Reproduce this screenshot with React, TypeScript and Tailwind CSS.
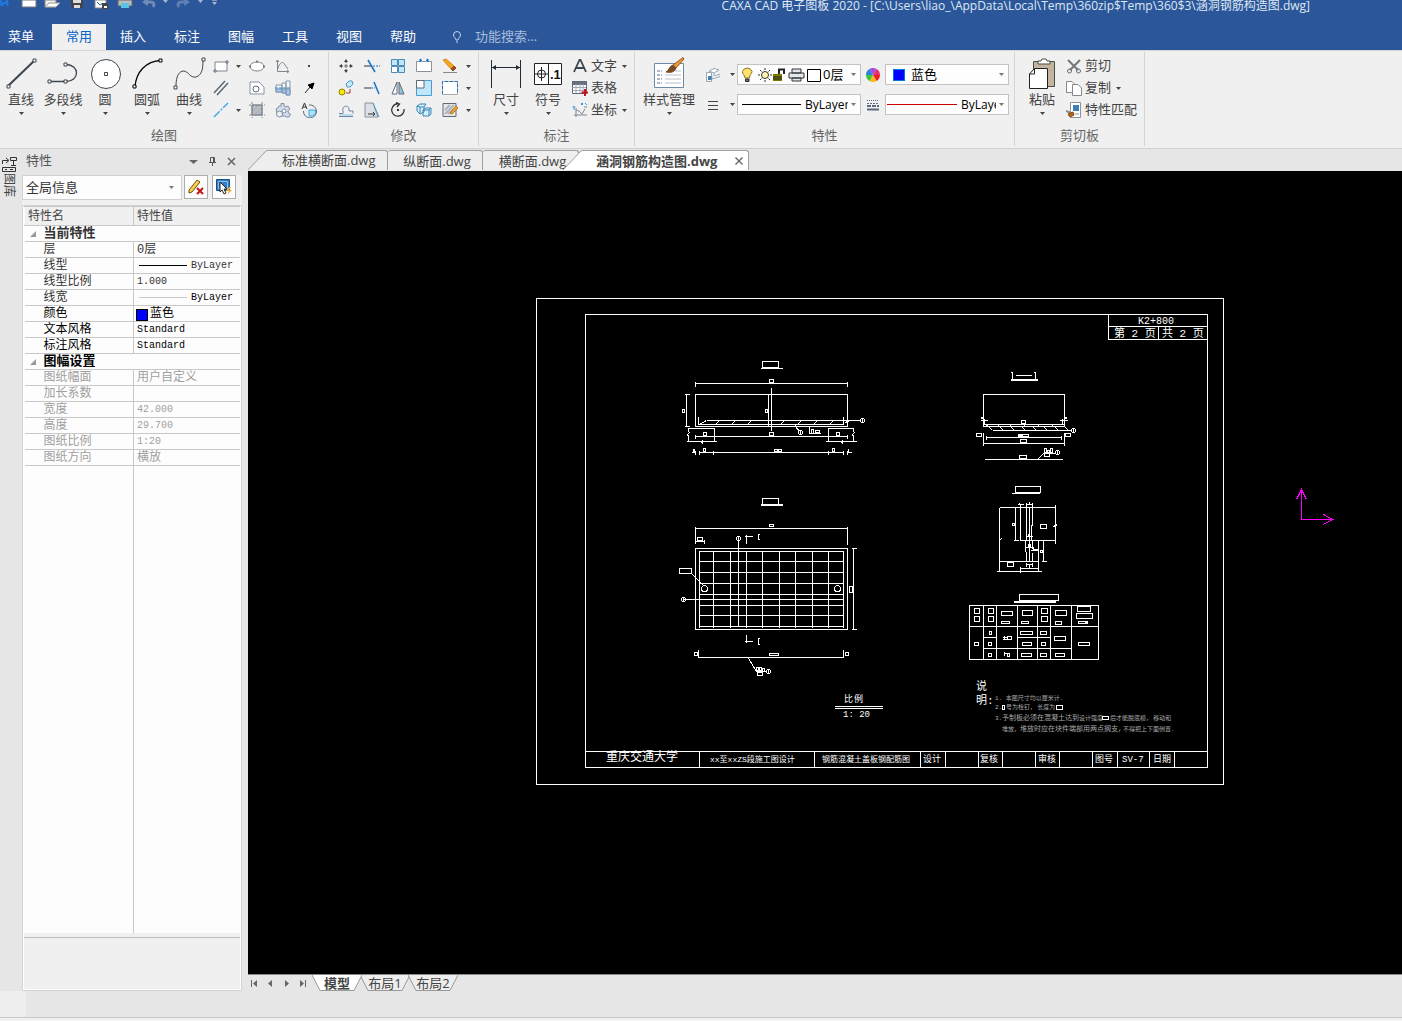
import React from "react";

const ui = "font-['Open_Sans','Noto_Sans_CJK_SC',sans-serif]";
const mono = "font-['Liberation_Mono','Noto_Sans_CJK_SC',monospace]";

function Caret({ className = "" }: { className?: string }) {
  return (
    <svg viewBox="0 0 5 3" className={"h-[3px] w-[5px] shrink-0 " + className} aria-hidden="true">
      <path d="M0 0H5L2.5 3Z" fill="currentColor" />
    </svg>
  );
}

function Ic({ children, className = "size-4" }: { children: React.ReactNode; className?: string }) {
  return (
    <svg viewBox="0 0 16 16" className={"shrink-0 " + className} fill="none" stroke="#5f6b7a" aria-hidden="true">
      {children}
    </svg>
  );
}

function Tool({ label, children, more }: { label: string; children: React.ReactNode; more?: boolean }) {
  return (
    <>
      <button aria-label={label} className="flex h-[22px] items-center justify-center">
        <Ic>{children}</Ic>
      </button>
      {more !== undefined &&
        (more ? (
          <button aria-label={label + "选项"} className="flex items-center justify-center">
            <Caret />
          </button>
        ) : (
          <span />
        ))}
    </>
  );
}

function Big({ label, children, className = "w-[42px]" }: { label: string; children: React.ReactNode; className?: string }) {
  return (
    <button className={"flex flex-col items-center " + className}>
      <svg viewBox="0 0 42 38" className="h-[38px] w-[42px]" fill="none" stroke="#3c4650" aria-hidden="true">
        {children}
      </svg>
      <span className="text-[13px] leading-[18px] whitespace-nowrap">{label}</span>
      <span className="flex h-[11px] items-center">
        <Caret />
      </span>
    </button>
  );
}

function Group({ title, children, className = "" }: { title: string; children: React.ReactNode; className?: string }) {
  return (
    <section className="flex shrink-0 flex-col border-r border-[#d4d4d4]" aria-label={title}>
      <div className={"flex h-[72px] " + className}>{children}</div>
      <h2 className="text-center text-[13px] leading-[22px] text-[#666]">{title}</h2>
    </section>
  );
}

function RowButton({ label, children, more }: { label: string; children: React.ReactNode; more?: boolean }) {
  return (
    <button className="flex h-[22px] items-center text-[13px] whitespace-nowrap">
      <Ic className="mr-[3px] size-4">{children}</Ic>
      {label}
      {more && <Caret className="ml-[5px]" />}
    </button>
  );
}

function Header() {
  const tabs = ["插入", "标注", "图幅", "工具", "视图", "帮助"];
  return (
    <header className="h-[50px] shrink-0 bg-[#2b579a] text-white">
      <div className="flex h-6 items-start justify-between">
        <svg viewBox="0 0 222 12" className="h-3 w-[222px]" fill="none" aria-label="快速访问工具栏">
          <path d="M0 0L3 6M0 5L8 1M6 0L8 6" stroke="#1f7ae0" strokeWidth="2" />
          <path d="M22 0H36V7H22Z" fill="#fff" stroke="#777" />
          <path d="M45 0H56V3H60L56 7H45Z" fill="#eee" stroke="#888" />
          <path d="M49 3H60L56 7H45Z" fill="#fff" stroke="#999" />
          <path d="M71 0H83V8H73L71 6Z" fill="#444" />
          <path d="M73 0H81V3H73ZM74 5H80V8H74Z" fill="#ddd" />
          <path d="M95 0H106V8H95Z" fill="#fff" stroke="#888" />
          <path d="M97 2L100 5L103 3" stroke="#16a" />
          <path d="M102 3H108V9H102Z" fill="#444" />
          <path d="M104 6H107V8H104Z" fill="#fff" />
          <path d="M118 0H132V6H118Z" fill="#bbb" stroke="#666" />
          <path d="M121 3H129V8H121Z" fill="#57c4e8" />
          <path d="M144 2H150C154 2 155 4 153 7" stroke="#7189b8" strokeWidth="3" />
          <path d="M142 2L148 -2V6Z" fill="#7189b8" />
          <path d="M188 2H182C178 2 177 4 179 7" stroke="#5f7eb4" strokeWidth="3" />
          <path d="M190 2L184 -2V6Z" fill="#5f7eb4" />
          <path d="M163 0H168L165.500 3ZM198 0H203L200.500 3ZM212 2H217L214.500 5Z" fill="#aab6cc" />
          <path d="M212 0H217" stroke="#ddd" />
        </svg>
        <h1 className="mr-[92px] text-[12px] leading-[12px] whitespace-nowrap text-[#dfe7f3]">
          CAXA CAD 电子图板 2020 - [C:\Users\liao_\AppData\Local\Temp\360zip$Temp\360$3\涵洞钢筋构造图.dwg]
        </h1>
      </div>
      <nav className="flex h-[26px] items-stretch text-[13px]" aria-label="功能区">
        <button className="w-[42px]">菜单</button>
        <button className="ml-[10px] w-[54px] bg-[#f0f0f0] text-[#0a64c8]">常用</button>
        {tabs.map((t) => (
          <button key={t} className="w-[54px]">
            {t}
          </button>
        ))}
        <label className="ml-[19px] flex items-center">
          <svg viewBox="0 0 16 16" className="mr-[10px] size-4" fill="none" stroke="#c9d6ea" aria-hidden="true">
            <path d="M7 11C7 9 4.500 8.500 4.500 6A3.500 3.500 0 0 1 11.500 6C11.500 8.500 9 9 9 11ZM7 13H9" />
          </svg>
          <input
            aria-label="功能搜索"
            placeholder="功能搜索..."
            className="w-28 bg-transparent text-[13px] outline-none placeholder:text-[#a9bcdb]"
          />
        </label>
      </nav>
    </header>
  );
}

function DrawGroup() {
  return (
    <Group title="绘图">
      <Big label="直线">
        <path d="M8 34L34 9" strokeWidth="2" />
        <path d="M7 33H10V36H7ZM33 7H36V10H33Z" fill="#fff" />
      </Big>
      <Big label="多段线">
        <path d="M8 29.500H24C38 29 38 13 24 12.500" strokeWidth="1.300" />
        <path d="M6 28H9V31H6ZM22 28H25V31H22ZM22 11H25V14H22Z" fill="#fff" />
      </Big>
      <Big label="圆">
        <circle cx="22" cy="22" r="14.500" fill="#fff" />
        <path d="M20.500 20.500H23.500V23.500H20.500Z" />
      </Big>
      <Big label="圆弧">
        <path d="M9 35C10 20 20 9 35 8.500" stroke="#000" strokeWidth="1.300" />
        <path d="M7 33H10V36H7ZM33 7H36V10H33Z" fill="#fff" stroke="#000" />
      </Big>
      <Big label="曲线">
        <path d="M8 34C8 24 11 19 16 19C21 20 22 26 28 25C34 23 35 17 35 8" />
        <path d="M6 34H9V37H6ZM34 6H37V9H34Z" fill="#fff" />
      </Big>
      <div className="mt-[3px] mr-[6px] grid grid-cols-[22px_12px_26px_26px_26px] content-start">
        <Tool label="矩形" more>
          <path d="M2 4H14V13H2Z" fill="#fff" stroke="#7d8792" />
          <path d="M1 12H3V14H1ZM13 3H15V5H13Z" fill="#fff" />
        </Tool>
        <Tool label="椭圆">
          <ellipse cx="8" cy="8.500" rx="7" ry="4.500" fill="#fff" stroke="#7d8792" />
          <path d="M7.500 3.500H8.500M.5 8.500H1.500M14.500 8.500H15.500" stroke="#333" strokeWidth="2" />
        </Tool>
        <Tool label="公式曲线">
          <path d="M2.500 2V13.500H14M2.500 12C5 3 8 3 10 7L13 11M1 4L2.500 2L4 4M12 12L14 13.500L12 15" stroke="#7d8792" />
        </Tool>
        <Tool label="点">
          <path d="M7 8H9" stroke="#444" strokeWidth="2" />
        </Tool>
        <Tool label="平行线" more={false}>
          <path d="M1 13L12 1M4 15L15 3" strokeWidth="1.600" />
        </Tool>
        <Tool label="多边形">
          <path d="M1 2H10L15 7V14H1Z" fill="#fff" stroke="#89929e" />
          <circle cx="7" cy="9" r="3" />
        </Tool>
        <Tool label="轴">
          <path d="M1 5H7V12H1ZM7 3H11V13H7ZM11 1H15V15H11Z" fill="#f4f7fa" stroke="#8a98a8" />
          <path d="M1 9H7V12H1ZM7 9H11V13H7ZM11 9H15V15H11Z" fill="#a9c6e6" stroke="#7d96b3" />
          <path d="M0 8H16" stroke="#3488cc" strokeDasharray="3 1" />
        </Tool>
        <Tool label="箭头">
          <path d="M4 13L9 7" stroke="#222" />
          <path d="M13 3L11 9L7 5Z" fill="#000" stroke="#000" />
        </Tool>
        <Tool label="中心线" more>
          <path d="M1 15L15 1" stroke="#3aa6e0" strokeWidth="1.400" strokeDasharray="8 1.500 2 1.500" />
        </Tool>
        <Tool label="填充">
          <path d="M3 3H13V13H3Z" fill="#b8bec6" />
          <path d="M3 10L10 3M3 6L6 3M5 13L13 5M9 13L13 9" stroke="#a3abb5" />
          <path d="M0 3H16M0 13H16M3 0V16M13 0V16" stroke="#888" strokeDasharray="2 1" />
        </Tool>
        <Tool label="图库">
          <path d="M6 1.500H9V4L11 5L13 4L15 7L13 8.500V10.500L15.500 12L14 15H11L10 14H6L2 11L1 7L3 6L4 4L6 4Z" fill="#d3dcea" stroke="#8090a5" />
          <circle cx="4.500" cy="12" r="3" fill="#eef1f5" stroke="#8090a5" />
          <circle cx="9" cy="9" r="2" fill="#fff" stroke="#8090a5" />
        </Tool>
        <Tool label="局部放大">
          <path d="M8 3A6.500 6.500 0 1 1 2.500 9" />
          <path d="M8 8H14.500V11A6 6 0 0 1 8 14Z" fill="#b5e0f5" stroke="#3aa6e0" />
          <path d="M1 7L3.500 1L6 7M2 5H5" stroke="#333" />
        </Tool>
      </div>
    </Group>
  );
}

function ModifyGroup() {
  return (
    <Group title="修改" className="px-1">
      <div className="mt-[3px] grid grid-cols-[26px_26px_26px_26px_26px_11px] content-start">
        <Tool label="平移">
          <path d="M8 2V5M8 11V14M2 8H5M11 8H14" stroke="#444" />
          <path d="M8 1L6 4H10ZM8 15L6 12H10ZM1 8L4 6V10ZM15 8L12 6V10Z" fill="#444" stroke="none" />
          <path d="M7 7H9V9H7Z" />
        </Tool>
        <Tool label="裁剪">
          <path d="M0 8H7" stroke="#333" />
          <path d="M4 2L11 14" stroke="#1672c4" strokeWidth="1.500" />
          <path d="M9 8H16" stroke="#1672c4" strokeDasharray="2 1" />
        </Tool>
        <Tool label="阵列">
          <path d="M1.500 1.500H7.500V7.500H1.500ZM8.500 1.500H14.500V7.500H8.500ZM8.500 8.500H14.500V14.500H8.500Z" fill="#bfe6fa" stroke="#4a8ab5" />
          <path d="M1.500 8.500H7.500V14.500H1.500Z" fill="#fff" stroke="#4a8ab5" />
        </Tool>
        <Tool label="打断">
          <path d="M4 3.500H.5V13.500H15.500V3.500H12M6 3.500H10" fill="#fff" stroke="#8a939d" />
          <path d="M4 1V4L6 2.500ZM12 1V4L10 2.500Z" fill="#1672c4" stroke="#1672c4" />
        </Tool>
        <Tool label="删除" more>
          <path d="M1 2L4 1L12 8L9 11Z" fill="#f5a623" stroke="#d78b10" />
          <path d="M9 11L12 8L14 10L11 13Z" fill="#a3542a" stroke="#854322" />
          <path d="M1 14.500H15" stroke="#888" />
        </Tool>
        <Tool label="平移复制">
          <circle cx="4" cy="12" r="3" fill="#ffe600" stroke="#8a8500" />
          <path d="M8 4L11 1H14L15 4L12 7H9Z" fill="#c8e9fa" stroke="#4a9bd0" />
          <path d="M8 13H12V9" stroke="#a33" />
        </Tool>
        <Tool label="延伸">
          <path d="M0 8H7" stroke="#333" />
          <path d="M7 8H11" stroke="#1672c4" strokeDasharray="2 1" />
          <path d="M10 2L15 14" stroke="#1672c4" strokeWidth="1.500" />
        </Tool>
        <Tool label="镜像">
          <path d="M7 2V14H2Z" fill="#fff" />
          <path d="M9 2V14H14Z" fill="#8fc4df" />
        </Tool>
        <Tool label="缩放">
          <path d="M.5.5H15.500V15.500H.5Z" fill="#bfe6fa" stroke="#4a9bd0" />
          <path d="M.5 .5H8V8H.5Z" fill="#fff" />
        </Tool>
        <Tool label="拉伸" more>
          <path d="M.5 1.500H15.500V14.500H.5Z" fill="#fff" stroke="#aaa" />
          <path d="M.5 14V1.500H15.500V14" stroke="#1672c4" strokeDasharray="3 2" />
        </Tool>
        <Tool label="等距线">
          <path d="M1 11.500H5C6 10 4 8 5 6C7 3 11 4 11 7V9H15V11.500M1 14.500H15" stroke="#6e87a2" />
          <path d="M1 13H15" stroke="#8cc4e8" />
        </Tool>
        <Tool label="过渡">
          <path d="M1 1H9L14 15H1Z" fill="#dcdfe3" stroke="#8a939d" />
          <path d="M9 1L15 15" stroke="#4a9bd0" />
          <path d="M4 12H11M9 10L11 12L9 14" stroke="#333" />
        </Tool>
        <Tool label="旋转">
          <path d="M9.500 2A6.200 6.200 0 1 0 14 7M6 .5L9.500 2L7 5" stroke="#333" strokeWidth="1.300" />
          <path d="M7 7H9V9H7Z" fill="#333" stroke="none" />
        </Tool>
        <Tool label="分解">
          <path d="M1 4L4 2H10L8 5V10L4 12L1 9ZM7 8L10 6H15V12L13 14H7Z" fill="#d5effb" stroke="#3b86b8" />
          <path d="M1 4L4 5V12M4 5H8M7 8H13V14M13 8L15 6" stroke="#3b86b8" />
        </Tool>
        <Tool label="编辑填充" more>
          <path d="M1 1.500H14V14.500H1Z" fill="#e6e6e6" />
          <path d="M3 12L12 3M3 8L8 3M6 12L12 7" stroke="#b0b5bb" strokeWidth="2" />
          <path d="M8 11L14 4L16 6L10 12Z" fill="#e9a43c" stroke="#b97716" />
        </Tool>
      </div>
    </Group>
  );
}

function AnnotateGroup() {
  return (
    <Group title="标注" className="pr-[7px] pl-[6px]">
      <Big label="尺寸">
        <path d="M6.500 8V36M35.500 8V36M7 15.500H35" stroke="#222c36" />
        <path d="M7 15.500L11 13V18ZM35 15.500L31 13V18Z" fill="#222c36" stroke="none" />
      </Big>
      <Big label="符号">
        <path d="M7.500 11.500H34.500V32.500H7.500Z" fill="#fff" stroke="#222" />
        <path d="M21.500 11.500V32.500M14.500 15V29M8 22H21" stroke="#222" />
        <circle cx="14.500" cy="22" r="4" stroke="#222" />
        <text x="23" y="27" fontSize="13" fontWeight="700" fontFamily="Liberation Sans" fill="#111" stroke="none">
          .1
        </text>
      </Big>
      <div className="mt-[3px] ml-[3px]">
        <RowButton label="文字" more>
          <path d="M2 14L7.500 2H8.500L14 14M4 10H12" stroke="#3c4650" strokeWidth="1.800" />
        </RowButton>
        <RowButton label="表格">
          <path d="M.5 1.500H14.500V13.500H.5Z" fill="#fff" />
          <path d="M.5 1.500H14.500V4.500H.5Z" fill="#68737f" />
          <path d="M.5 7.500H14M.5 10.500H14M4 4V13M8 4V13M11 4V13" stroke="#a2a9b2" />
          <path d="M13 9V16M9.500 12.500H16" stroke="#c4141c" strokeWidth="2" />
        </RowButton>
        <RowButton label="坐标" more>
          <path d="M4 6V15M2 13H15M4 8L7 9L10 12L13 7M12 5H15" stroke="#7d8792" />
          <path d="M1 4L2 6L3 4M2 6V8M9 1L11 3M11 1L9 3M13 1L15 3" stroke="#3a9ad9" />
        </RowButton>
      </div>
    </Group>
  );
}

const combo = "flex h-[21px] items-center border border-[#c3c3c3] bg-[#fdfdfd] text-[12px] text-black";

function PropsGroup() {
  return (
    <Group title="特性" className="px-1">
      <Big label="样式管理" className="w-[60px]">
        <path d="M6.500 11.500H35.500V35.500H6.500Z" fill="#fff" stroke="#6f8aa9" />
        <path d="M9 19H14M9 23H14M9 27H14M9 31H14" stroke="#5a7390" strokeDasharray="3 1" />
        <path d="M17 23H33M17 27H33M17 31H33M27 19H33" stroke="#b9c2cc" />
        <path d="M25 13L35 5.500L36 7L28 16Z" fill="#e89a38" stroke="#9b5a1c" />
        <path d="M18 20C21 19 21 14 25 13L28 16C27 20 23 21 18 20Z" fill="#7a4a24" stroke="#7a4a24" />
      </Big>
      <div className="mt-3 grid grid-cols-[28px_10px_124px_24px_124px] content-start items-center gap-y-[9px] pr-px">
        <button aria-label="图层工具" className="flex justify-center">
          <Ic>
            <path d="M4 4L9 1.500L14 3L9 6ZM9 6V9L15 7M7 9V12L15 9.500" fill="#fff" stroke="#9aa5b2" />
            <path d="M1.500 5.500H6.500V14.500H1.500Z" fill="#fff" stroke="#9aa5b2" />
            <path d="M3 9H6.500V13H3Z" fill="#3b80b8" stroke="none" />
          </Ic>
        </button>
        <button aria-label="图层选项" className="flex justify-center">
          <Caret />
        </button>
        <label className={combo + " pl-px"}>
          <svg viewBox="0 0 84 18" className="h-[18px] w-[84px] shrink-0" fill="none" stroke="#333" aria-hidden="true">
            <path d="M6 12C6 9 3 8 3.500 5.500A5 5 0 0 1 13 5.500C13 8 10 9 10.500 12Z" fill="#ffe36e" stroke="#8c7420" />
            <path d="M6.500 13H10V15.500H6.500Z" fill="#666" />
            <circle cx="26" cy="9" r="3.500" fill="#fff7b0" />
            <path d="M26 2V4M26 14V16M19 9H21M31 9H33M21 4L22.500 5.500M31 4L29.500 5.500M21 14L22.500 12.500M31 14L29.500 12.500" />
            <path d="M34 8H43V15H34Z" fill="#7d7a00" stroke="none" />
            <path d="M34 11H43M34 13H43" stroke="#222" />
            <path d="M40 8V3.500H45V8" stroke="#222" strokeWidth="2" />
            <path d="M53 3H62V7H53ZM50 7H65V12H50ZM53 12H62V15H53Z" fill="#e1e7ee" />
            <path d="M68.500 3.500H81.500V15.500H68.500Z" fill="#fff" stroke="#000" />
          </svg>
          <select aria-label="图层" className="w-[26px] appearance-none overflow-hidden bg-transparent text-[13px] outline-none">
            <option>0层</option>
          </select>
          <Caret className="mr-1 ml-auto text-[#777]" />
        </label>
        <span className="flex justify-center">
          <svg viewBox="-7 -7 14 14" className="size-[14px]" aria-hidden="true">
            <path d="M0 0L-3.500-6A7 7 0 0 1 3.500-6Z" fill="#a64be0" />
            <path d="M0 0L3.500-6A7 7 0 0 1 7 0Z" fill="#e8306d" />
            <path d="M0 0H7A7 7 0 0 1 3.500 6Z" fill="#f02020" />
            <path d="M0 0L3.500 6A7 7 0 0 1-3.500 6Z" fill="#f6b81c" />
            <path d="M0 0L-3.500 6A7 7 0 0 1-7 0Z" fill="#3cc43c" />
            <path d="M0 0H-7A7 7 0 0 1-3.500-6Z" fill="#2f7fe0" />
          </svg>
        </span>
        <label className={combo + " pl-[7px]"}>
          <span className="mr-[6px] size-3 border border-[#0078d7] bg-[#0000ff]" />
          <select aria-label="颜色" className="w-20 appearance-none bg-transparent text-[13px] outline-none">
            <option>蓝色</option>
          </select>
          <Caret className="mr-1 ml-auto text-[#777]" />
        </label>
        <span className="flex justify-center">
          <Ic>
            <path d="M3 4.500H13M3 8.500H13M3 12.500H13" stroke="#444" />
          </Ic>
        </span>
        <button aria-label="线型选项" className="flex justify-center">
          <Caret />
        </button>
        <label className={combo + " pl-1"}>
          <span className="mr-1 h-px flex-1 bg-black" />
          <select aria-label="线型" className="w-[43px] appearance-none bg-transparent outline-none">
            <option>ByLayer</option>
          </select>
          <Caret className="mr-1 ml-[3px] text-[#777]" />
        </label>
        <span className="flex justify-center">
          <Ic>
            <path d="M2 3.500H14" strokeDasharray="1 1" />
            <path d="M2 6.500H14" strokeDasharray="2 1" />
            <path d="M2 9H14" strokeWidth="2" strokeDasharray="4 1" />
            <path d="M2 12.500H14" strokeWidth="2" />
          </Ic>
        </span>
        <label className={combo + " pl-px"}>
          <span className="mr-1 h-px flex-1 bg-[#c80000]" />
          <select aria-label="线宽" className="w-[35px] appearance-none overflow-hidden bg-transparent text-clip outline-none">
            <option>ByLayer</option>
          </select>
          <Caret className="mr-1 ml-[3px] text-[#777]" />
        </label>
      </div>
    </Group>
  );
}

function ClipboardGroup() {
  return (
    <Group title="剪切板" className="pr-[7px] pl-[6px]">
      <Big label="粘贴">
        <path d="M12.500 9.500H33.500V34.500H12.500Z" fill="#c3b49f" stroke="#4a4a4a" />
        <path d="M17 12V9H20L21 7H25L26 9H29V12Z" fill="#fff" stroke="#4a4a4a" />
        <path d="M13.500 16.500H26.500V36.500H8.500V22Z" fill="#fff" stroke="#222" />
        <path d="M13.500 16.500V22H8.500" stroke="#222" />
      </Big>
      <div className="mt-[3px] ml-[3px]">
        <RowButton label="剪切">
          <path d="M2 2L12 12M14 2L4 12" stroke="#777" strokeWidth="2" />
          <circle cx="3.500" cy="13" r="2" />
          <circle cx="12.500" cy="13" r="2" />
        </RowButton>
        <RowButton label="复制" more>
          <path d="M.5 1.500H6L9.500 5V12.500H.5Z" fill="#fff" stroke="#888" />
          <path d="M6.500 4.500H12L15.500 8V15.500H6.500Z" fill="#fff" stroke="#888" />
        </RowButton>
        <RowButton label="特性匹配">
          <path d="M4.500.5H14.500V15.500H4.500Z" fill="#fff" stroke="#8a939d" />
          <path d="M7 3H13V9H7Z" fill="#3f7fb8" stroke="none" />
          <path d="M9 12H13" stroke="#8a939d" />
          <path d="M0 9L5 11" stroke="#888" strokeWidth="2" />
          <path d="M2 12L7 10L8 13L4 15Z" fill="#b5651d" stroke="#8b4a12" />
        </RowButton>
      </div>
    </Group>
  );
}

type Row = { name: string; value?: React.ReactNode; section?: boolean; tone: string };
const dark = "text-[#333]";
const black = "text-black";
const dim = "text-[#a0a0a0]";
const rows: Row[] = [
  { name: "当前特性", section: true, tone: dark },
  { name: "层", value: "0层", tone: dark },
  {
    name: "线型",
    value: (
      <span className="flex items-center">
        <span className="mr-1 ml-[2px] h-px w-12 bg-black" />
        ByLayer
      </span>
    ),
    tone: dark,
  },
  { name: "线型比例", value: "1.000", tone: dark },
  {
    name: "线宽",
    value: (
      <span className="flex items-center text-black">
        <span className="mr-1 ml-[2px] h-px w-12 bg-[#c8c8c8]" />
        ByLayer
      </span>
    ),
    tone: dark,
  },
  {
    name: "颜色",
    value: (
      <span className="-ml-px flex items-center">
        <span className="mr-[2px] size-3 border border-black bg-[#0000ff]" />
        蓝色
      </span>
    ),
    tone: black,
  },
  { name: "文本风格", value: "Standard", tone: black },
  { name: "标注风格", value: "Standard", tone: black },
  { name: "图幅设置", section: true, tone: black },
  { name: "图纸幅面", value: "用户自定义", tone: dim },
  { name: "加长系数", value: "", tone: dim },
  { name: "宽度", value: "42.000", tone: dim },
  { name: "高度", value: "29.700", tone: dim },
  { name: "图纸比例", value: "1:20", tone: dim },
  { name: "图纸方向", value: "横放", tone: dim },
];

// Latin runs use a smaller monospace size than the Chinese labels.
function cellSize(r: Row) {
  const chinese = r.name === "颜色" || (typeof r.value === "string" && /[\u4e00-\u9fff]/.test(r.value));
  return chinese ? "pt-[2px] text-[12px] leading-[13px]" : "text-[10px] leading-[15px]";
}

function PropertyPanel() {
  return (
    <aside className="flex w-[220px] shrink-0 flex-col" aria-label="特性">
      <div className="flex h-[26px] items-start pt-[2px] pr-[6px] pl-1 text-[#555]">
        <h2 className="flex-1 text-[13px] leading-[18px]">特性</h2>
        <div className="mt-[6px] flex items-center gap-[10px]">
          <button aria-label="菜单">
            <svg viewBox="0 0 9 9" className="size-[9px]">
              <path d="M0 3H9L4.500 7Z" fill="#666" />
            </svg>
          </button>
          <button aria-label="固定">
            <svg viewBox="0 0 9 9" className="size-[9px]" fill="none" stroke="#555">
              <path d="M2.500.5H6.500V5.500M2.500.5V5.500M5.500 .5V5.500M1 5.500H8M4.500 6V9" />
            </svg>
          </button>
          <button aria-label="关闭">
            <svg viewBox="0 0 9 9" className="size-[9px]" fill="none" stroke="#666" strokeWidth="1.500">
              <path d="M1 1L8 8M8 1L1 8" />
            </svg>
          </button>
        </div>
      </div>
      <div className="flex h-[30px] items-start bg-[#f0f0f0]">
        <label className="flex h-[25px] w-40 items-center border border-[#d0d0d0] bg-[#fdfdfd] pr-[7px] pl-[3px] text-[#333]">
          <select aria-label="选择对象" className="min-w-0 flex-1 appearance-none bg-transparent text-[13px] outline-none">
            <option>全局信息</option>
          </select>
          <Caret className="text-[#777]" />
        </label>
        <button aria-label="清除选择" className="ml-[2px] flex size-6 items-center justify-center border border-[#adadad] bg-[#fdfdfd]">
          <Ic>
            <path d="M1 11L9 1L12 3L4 13L1 14Z" fill="#f7cf4d" stroke="#6b5212" />
            <path d="M9 9L15 15M15 9L9 15" stroke="#c81414" strokeWidth="2" />
          </Ic>
        </button>
        <button aria-label="快速选择" className="ml-1 flex size-6 items-center justify-center border border-[#adadad] bg-[#fdfdfd]">
          <Ic>
            <path d="M.5.5H13.500V11.500H.5Z" fill="#2d7fc8" stroke="#1c4f86" />
            <path d="M2.500 2.500H11.500V9.500H2.500Z" stroke="#8fc0ea" />
            <path d="M4 3L11 10H8L10 14L8 15L6 11L4 13Z" fill="#fff" stroke="#222" />
            <path d="M13 8L10 12H13L11 16L16 11H13L15 8Z" fill="#f5a623" stroke="none" />
          </Ic>
        </button>
      </div>
      <div className="flex min-h-0 flex-1 flex-col border border-[#d4d4d4] bg-[#fdfdfd] px-px">
        <table className={"w-full table-fixed border-collapse text-left text-[12px] leading-[13px] " + mono}>
          <colgroup>
            <col className="w-[109px]" />
            <col />
          </colgroup>
          <thead>
            <tr className="h-[19px] bg-[#f0f0f0] text-[#444]">
              <th className="border border-[#c8c8c8] border-l-transparent p-0 pt-[3px] pl-[3px] font-normal">特性名</th>
              <th className="border border-[#c8c8c8] border-r-transparent p-0 pt-[3px] pl-[3px] font-normal">特性值</th>
            </tr>
          </thead>
          <tbody>
            {rows.map((r) =>
              r.section ? (
                <tr key={r.name} className={"h-4 border-b border-[#c8c8c8] " + r.tone}>
                  <th colSpan={2} className="p-0 pl-[5px]">
                    <span className="flex items-center">
                      <svg viewBox="0 0 6 6" className="mr-2 size-[6px]" aria-hidden="true">
                        <path d="M6 0V6H0Z" fill="#999" />
                      </svg>
                      <span className="text-[13px] leading-[15px]">{r.name}</span>
                    </span>
                  </th>
                </tr>
              ) : (
                <tr key={r.name} className={"h-4 border-b border-[#c8c8c8] " + r.tone}>
                  <th className="border-r border-[#c8c8c8] p-0 pt-[2px] pl-[19px] font-normal">{r.name}</th>
                  <td className={"p-0 pl-[3px] " + cellSize(r)}>{r.value}</td>
                </tr>
              ),
            )}
          </tbody>
        </table>
        <div className="w-[110px] flex-1 border-r border-[#c8c8c8]" />
        <div className="mb-px h-14 border-t-4 border-[#f0f0f0] bg-[#f0f0f0]">
          <div className="border-t border-[#bdbdbd]" />
        </div>
      </div>
    </aside>
  );
}

type Box = [number, number, number, number];

const frames: Box[] = [
  [536, 298, 687, 486], [585, 314, 622, 453], [1108, 314, 99, 25],
  [695, 394, 152, 32], [695, 548, 152, 81], [983, 394, 81, 32], [969, 605, 129, 54],
];

const boxes: Box[] = [
  [762, 361, 16, 6], [769, 379, 4, 3], [682, 409, 2, 3], [765, 409, 2, 3], [703, 432, 3, 3], [836, 432, 3, 3],
  [769, 432, 4, 3], [811, 429, 2, 4], [815, 430, 4, 2], [703, 448, 2, 3], [832, 448, 2, 3], [774, 449, 3, 2], [778, 449, 3, 2],
  [762, 498, 16, 6], [769, 524, 4, 2], [697, 537, 5, 3], [679, 568, 12, 5], [849, 586, 3, 6],
  [694, 652, 3, 3], [845, 652, 3, 3], [769, 653, 9, 2], [756, 667, 2, 3], [759, 667, 2, 3], [762, 668, 2, 3], [757, 672, 5, 3],
  [1021, 420, 4, 3], [976, 433, 5, 3], [1065, 433, 5, 3], [1018, 434, 4, 2], [1022, 434, 6, 2], [1020, 439, 6, 3], [1019, 455, 7, 3],
  [1044, 448, 2, 4], [1047, 450, 2, 2], [1050, 448, 2, 4], [1044, 453, 5, 3],
  [1015, 486, 25, 6], [1012, 523, 2, 2], [1040, 524, 6, 4], [1040, 550, 2, 2], [1007, 562, 6, 4], [1019, 594, 39, 6],
  [974, 608, 5, 5], [974, 616, 5, 5], [988, 608, 5, 5], [988, 616, 5, 5], [1001, 611, 11, 4], [1001, 621, 8, 2],
  [1022, 610, 10, 5], [1021, 621, 7, 2], [1041, 608, 6, 5], [1041, 616, 6, 5], [1055, 610, 11, 5], [1055, 621, 6, 3],
  [1077, 606, 13, 5], [1076, 613, 16, 5], [1078, 621, 7, 2], [1086, 621, 1, 2], [974, 642, 4, 3], [989, 631, 2, 3],
  [988, 642, 3, 3], [988, 653, 3, 3], [1007, 636, 4, 3], [1007, 653, 2, 3], [1020, 631, 12, 3], [1022, 642, 9, 3],
  [1021, 653, 10, 3], [1040, 631, 6, 3], [1041, 642, 4, 3], [1040, 653, 6, 3], [1054, 636, 11, 4], [1055, 653, 9, 3],
  [1078, 642, 11, 3], [1002, 705, 2, 4], [1056, 705, 6, 4], [1102, 716, 6, 3],
];

const lines = [
  // title block
  "M1108 326H1207M1158 326V339M585 751H1207",
  "M699 751V767M814 751V767M920 751V767M945 751V767M978 751V767M1002 751V767M1035 751V767M1059 751V767M1092 751V767M1117 751V767M1149 751V767M1174 751V767",
  // elevation
  "M760 368H782M695 383H847M695 381V386M847 381V386M686 394V426M684 394H689M684 426H689M768 394V426M771 387V430",
  "M698 416V424H843V416M706 420H860M699 424L706 420M715 424L719 420M731 424L735 420M747 424L751 420M780 424L784 420M797 424L801 420M813 424L817 420M829 424L833 420M845 422L849 420",
  "M688 441V436L687 434L689 432L688 431V428H714V441M686 441H701L702 443L702 440L703 441H716M828 441V428H853V431L854 432L852 434L853 436V441M825 441H841L842 443L842 440L843 441H856",
  "M695 436H847M695 434V438M847 434V438M795 425L797 429L799 430M809 425V433H820",
  "M699 452H843M699 450V454M713 450V454M828 450V454M843 450V454M695 450V454M847 450V454M691 452H695M847 452H851M693 448V452M694 448V452M848 448V452",
  // plan
  "M760 504H782M760 505H782M695 528H847M695 526V543M847 526V544M695 541H704M704 539V543M738 540V626M746 534V543M744 536H752M757 534H759M758 534V539M757 539H759",
  "M699 550V627M713 550V627M730 550V627M746 550V627M762 550V627M779 550V627M795 550V627M812 550V627M828 550V627M843 550V627",
  "M698 551H843M698 561H843M698 572H843M698 583H843M698 594H843M683 599H843M698 605H843M698 615H843M698 626H843",
  "M691 573L704 586M853 548V629M851 548H856M851 629H856M746 634V642M744 641H752M757 638H759M758 638V644M757 644H759M698 649V657H843V649M748 658L756 671H766",
  "M834 706H882M834 708H882",
  // side section
  "M1010 372H1012V379M1033 372H1035V379M1015 375H1031M1010 379H1037M1010 380H1037M983 424H1064",
  "M980 420H987M984 418V423M981 416V418M982 416V418M1059 420H1067M1062 418V423M1065 416V418M1066 416V418",
  "M992 430H1071M988 426L992 430M999 426L1003 430M1010 426L1014 430M1021 426L1025 430M1032 426L1036 430M1043 426L1047 430M1054 426L1058 430M1064 426L1068 430M987 424L986 426M998 424V426M1010 424V426M1024 424V426M1038 424V426M1052 424V426",
  "M983 432V445M1064 432V445M986 437H1061M986 435V439M1061 435V439M983 443H1064M984 459H1062M1037 459L1043 453H1055M1018 435H1022",
  // detail
  "M1011 493H1039M999 507V571M999 507H1055M1055 504V543M1020 540H1055M1020 504V540M1015 507V540M1013 540H1018M1026 507V540M1029 507V561M1032 507V524L1031 526V540M1025 540V551L1026 552V561M1032 540V548M1032 552V561",
  "M1038 540V571M1043 540V561M1041 561H1046M999 561H1038M996 571H1041M1020 568H1038M1020 566V572M1017 504H1023M1019 502V504M1026 504H1032M1026 502V506M1032 502V506M1029 501V504",
  "M1026 536H1032M1028 533V536M1025 547H1033V549H1038V552M1030 550H1038M1028 543V547M1030 543V547M1026 564H1032M1026 562V566M1032 562V566M1029 564V567M998 541L1001 538M1053 526L1057 524",
  // quantity table
  "M1013 601H1055M1013 602H1055M983 605V659M996 605V659M1017 605V659M1037 605V659M1050 605V659M1071 605V659M969 626H1098M983 637H996M1017 637H1050M983 648H1071",
  "M1002 639H1006M1004 635V639M1002 637H1006M1003 653H1006M1004 651V655",
];

const marks: [number, number][] = [
  [862, 420], [800, 432], [738, 538], [683, 599], [768, 671], [1073, 430], [1057, 452],
];

const cjk = "Liberation Mono, Noto Sans CJK SC, monospace";

function Drawing() {
  return (
    <svg
      viewBox="248 171 1154 803"
      className="h-[803px] w-[1154px] shrink-0"
      fill="none"
      stroke="#fff"
      role="img"
      aria-label="涵洞钢筋构造图"
    >
      <g transform="translate(.5 .5)" shapeRendering="crispEdges">
        {frames.concat(boxes).map(([x, y, w, h], i) => (
          <rect key={i} x={x} y={y} width={w} height={h} />
        ))}
        {lines.map((d) => (
          <path key={d} d={d} />
        ))}
        {marks.map(([x, y]) => (
          <g key={x}>
            <circle cx={x} cy={y} r="2" />
            <path d={`M${x} ${y - 2}V${y + 2}`} />
          </g>
        ))}
        <circle cx="704" cy="588" r="3" />
        <circle cx="837" cy="588" r="3" />
        <path d="M1301 489V519H1332M1296 499L1301 489L1306 499M1323 514L1332 519L1323 524" stroke="#f0f" />
      </g>
      <g fill="#fff" stroke="none" fontFamily={cjk} fontSize="9">
        <text x="1138" y="324" fontSize="10">K2+800</text>
        <text x="1114" y="337" fontSize="11">第 2 页</text>
        <text x="1162" y="337" fontSize="11">共 2 页</text>
        <text x="976" y="690" fontSize="11">说</text>
        <text x="976" y="704" fontSize="11">明:</text>
        <text x="606" y="761" fontSize="12">重庆交通大学</text>
        <text x="844" y="702">比</text>
        <text x="854" y="702">例</text>
        <text x="843" y="717">1: 20</text>
        <text x="710" y="762" fontSize="8">xx至xxZS段施工图设计</text>
        <text x="822" y="762" fontSize="8">钢筋混凝土盖板钢配筋图</text>
        <text x="923" y="762">设计</text>
        <text x="980" y="762">复核</text>
        <text x="1038" y="762">审核</text>
        <text x="1095" y="762">图号</text>
        <text x="1122" y="762">SV-7</text>
        <text x="1153" y="762">日期</text>
        <g fill="#a8a8a8" fontSize="6">
          <text x="995" y="700">1. 本图尺寸均以厘米计.</text>
          <text x="995" y="709">2.</text>
          <text x="1006" y="709">号为栓钉, 长度为</text>
          <text x="995" y="720">3.</text>
          <text x="1002" y="720" fontSize="7">予制板必须在混凝土达到</text>
          <text x="1079" y="720">设计强度</text>
          <text x="1110" y="720">后才能脱底模, 移动和</text>
          <text x="1002" y="731">堆放,</text>
          <text x="1020" y="731" fontSize="7">堆放时应在块件端部用两点搁支,</text>
          <text x="1123" y="731">不得把上下面倒置.</text>
        </g>
      </g>
    </svg>
  );
}

function Slant({ fill }: { fill: string }) {
  return (
    <svg viewBox="0 0 20 20" className="h-5 w-5 shrink-0" aria-hidden="true">
      <path d="M0 20L17 2Q18 .5 20 .5V20Z" fill={fill} />
      <path d="M0 20L17 2Q18 .5 20 .5" fill="none" stroke="#a0a0a0" />
    </svg>
  );
}

function DocTabs() {
  const body = "border-t border-r border-[#a0a0a0] rounded-tr-[3px]";
  return (
    <div className="flex h-[22px] items-end border-b border-[#e6e6e6] text-[13px] leading-[18px] whitespace-nowrap text-[#444]" role="tablist">
      <button role="tab" aria-selected="false" className="flex">
        <Slant fill="#eee" />
        <span className={"h-5 w-[120px] bg-[#eee] pl-[14px] text-left " + body}>标准横断面.dwg</span>
      </button>
      <button role="tab" aria-selected="false" className={"h-5 w-[95px] rounded-tl-[3px] bg-[#eee] pl-1 " + body}>
        纵断面.dwg
      </button>
      <button role="tab" aria-selected="false" className={"h-5 w-[96px] rounded-tl-[3px] bg-[#eee] pl-1 " + body}>
        横断面.dwg
      </button>
      <div className="-ml-4 flex">
        <Slant fill="#fff" />
        <span className={"flex h-5 w-[166px] items-center bg-white pr-[5px] pl-[13px] " + body}>
          <button role="tab" aria-selected="true" className="font-bold">
            涵洞钢筋构造图.dwg
          </button>
          <button aria-label="关闭文档" className="ml-auto">
            <svg viewBox="0 0 8 8" className="size-2" stroke="#666" strokeWidth="1.400">
              <path d="M.5.5L7.500 7.500M7.500.5L.5 7.500" />
            </svg>
          </button>
        </span>
      </div>
    </div>
  );
}

function SheetTab({ label, active }: { label: string; active?: boolean }) {
  return (
    <button role="tab" aria-selected={!!active} className={"relative -mr-[2px] h-4 w-[50px] " + (active ? "z-10 font-bold" : "")}>
      <svg viewBox="0 0 50 16" className="absolute inset-0 h-4 w-[50px]" aria-hidden="true">
        <path d="M0 0L8 15.500H42L50 0" fill={active ? "#fff" : "#eee"} stroke="#999" />
      </svg>
      <span className="relative block leading-[13px]">{label}</span>
    </button>
  );
}

function SheetTabs() {
  const nav: [string, string][] = [
    ["首页", "M1 1H2V8H1ZM7 1V8L3 4.500Z"],
    ["上一页", "M6 1V8L2 4.500Z"],
    ["下一页", "M3 1V8L7 4.500Z"],
    ["末页", "M2 1V8L6 4.500ZM7 1H8V8H7Z"],
  ];
  return (
    <div className="flex h-[17px] items-start border-t border-[#888] text-[13px] text-[#444]">
      <div className="flex pt-1 pl-[2px]">
        {nav.map(([label, d]) => (
          <button key={label} aria-label={label} className="mr-[7px]">
            <svg viewBox="0 0 9 9" className="size-[9px]" fill="#666">
              <path d={d} />
            </svg>
          </button>
        ))}
      </div>
      <div className="-ml-[2px] flex" role="tablist">
        <SheetTab label="模型" active />
        <SheetTab label="布局1" />
        <SheetTab label="布局2" />
      </div>
    </div>
  );
}

export default function App() {
  return (
    <div className={"flex h-screen min-w-0 flex-col overflow-hidden bg-[#e6e6e6] text-[#444] " + ui}>
      <Header />
      <div className="flex shrink-0 overflow-hidden border-t border-b border-t-[#d4d4d4] border-b-[#d0d0d0] bg-[#f0f0f0] pt-px pb-[2px]">
        <DrawGroup />
        <ModifyGroup />
        <AnnotateGroup />
        <PropsGroup />
        <ClipboardGroup />
      </div>
      <div className="flex min-h-0 flex-1">
        <div className="w-[22px] shrink-0 pt-[7px]">
          <button className="flex w-[18px] flex-col items-center text-[12px] leading-[14px]">
            <svg viewBox="0 0 16 17" className="h-[17px] w-4" fill="none" stroke="#333" aria-hidden="true">
              <path d="M1.500 8V4.500H7M5 2L8 4.500L5 7M9.500 1.500H15.500V4.500H9.500ZM12.500 5V9M10 9.500H15M1.500 11.500H14.500V15.500H1.500ZM4 13.500H6M9 13.500H12" />
            </svg>
            <span className="[text-orientation:sideways] [writing-mode:vertical-rl]">图库</span>
          </button>
        </div>
        <PropertyPanel />
        <main className="ml-[6px] flex min-w-0 flex-1 flex-col">
          <DocTabs />
          <div className="flex min-h-0 flex-1 overflow-hidden bg-black">
            <Drawing />
          </div>
          <SheetTabs />
        </main>
      </div>
      <footer className="h-[30px] shrink-0">
        <div className="h-[26px] w-[26px] bg-[#eee]" />
        <div className="h-1 border-t border-[#c8c8c8] bg-[#f0f0f0]" />
      </footer>
    </div>
  );
}
